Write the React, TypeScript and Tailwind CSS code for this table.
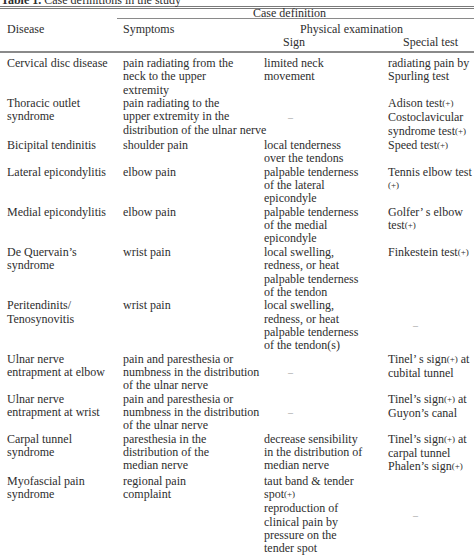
import React from "react";

type Cell = string[] | "-";
interface Row { d: string[]; s: string[]; g: Cell; t: Cell }

const rows: Row[] = [
  { d: ["Cervical disc disease"], s: ["pain radiating from the", "neck to the upper", "extremity"], g: ["limited neck", "movement"], t: ["radiating pain by", "Spurling test"] },
  { d: ["Thoracic outlet", "syndrome"], s: ["pain radiating to the", "upper extremity in the", "distribution of the ulnar nerve"], g: "-", t: ["Adison test(+)", "Costoclavicular", "syndrome test(+)"] },
  { d: ["Bicipital tendinitis"], s: ["shoulder pain"], g: ["local tenderness", "over the tendons"], t: ["Speed test(+)"] },
  { d: ["Lateral epicondylitis"], s: ["elbow pain"], g: ["palpable tenderness", "of the lateral", "epicondyle"], t: ["Tennis elbow test", "(+)"] },
  { d: ["Medial epicondylitis"], s: ["elbow pain"], g: ["palpable tenderness", "of the medial", "epicondyle"], t: ["Golfer\u2019 s elbow", "test(+)"] },
  { d: ["De Quervain\u2019s", "syndrome"], s: ["wrist pain"], g: ["local swelling,", "redness, or heat", "palpable tenderness", "of the tendon"], t: ["Finkestein test(+)"] },
  { d: ["Peritendinits/", "Tenosynovitis"], s: ["wrist pain"], g: ["local swelling,", "redness, or heat", "palpable tenderness", "of the tendon(s)"], t: "-" },
  { d: ["Ulnar nerve", "entrapment at elbow"], s: ["pain and paresthesia or", "numbness in the distribution", "of the ulnar nerve"], g: "-", t: ["Tinel\u2019 s sign(+) at", "cubital tunnel"] },
  { d: ["Ulnar nerve", "entrapment at wrist"], s: ["pain and paresthesia or", "numbness in the distribution", "of the ulnar nerve"], g: "-", t: ["Tinel\u2019s sign(+) at", "Guyon\u2019s canal"] },
  { d: ["Carpal tunnel", "syndrome"], s: ["paresthesia in the", "distribution of the", "median nerve"], g: ["decrease sensibility", "in the distribution of", "median nerve"], t: ["Tinel\u2019s sign(+) at", "carpal tunnel", "Phalen\u2019s sign(+)"] },
  { d: ["Myofascial pain", "syndrome"], s: ["regional pain", "complaint"], g: ["taut band & tender", "spot(+)", "reproduction of", "clinical pain by", "pressure on the", "tender spot"], t: "-" },
];

function Txt({ text }: { text: string }) {
  const parts = text.split("(+)");
  return (
    <>
      {parts.map((p, i) => (
        <React.Fragment key={i}>
          {p}
          {i < parts.length - 1 && <span className="text-[9px] relative -top-[1px]">(+)</span>}
        </React.Fragment>
      ))}
    </>
  );
}

function Lines({ lines }: { lines: string[] }) {
  return (
    <div>
      {lines.map((l, i) => (
        <div key={i} className="whitespace-nowrap">
          <Txt text={l} />
        </div>
      ))}
    </div>
  );
}

function CellView({ c, dashPad }: { c: Cell; dashPad: string }) {
  if (c === "-") {
    return (
      <div className={`flex items-center h-full ${dashPad} text-[#9a9a9a]`}>
        <span className="text-[10px]">–</span>
      </div>
    );
  }
  return <Lines lines={c} />;
}

export default function App() {
  return (
    <div
      className="w-[474px] h-[555px] overflow-hidden bg-white text-[#2e2e2e] text-[12px]"
      style={{ fontFamily: '"Liberation Serif", "Times New Roman", serif' }}
    >
      <div className="-mt-[6px] pl-[1px] leading-[12px] whitespace-nowrap">
        <b>Table 1.</b> Case definitions in the study
      </div>
      <div className="h-[3px] border-t border-b border-[#7a7a7a]" />
      <div className="h-[9px] pl-[117px] flex items-center">
        <div className="flex-1 text-center leading-[9px] pr-[12px]">Case definition</div>
      </div>
      <div className="ml-[117px] h-px bg-[#8a8a8a]" />
      <div className="grid grid-cols-[116px_141px_124px_1fr] pl-[7px] leading-[13px] mt-[4px]">
        <div>Disease</div>
        <div>Symptoms</div>
        <div className="col-span-2 pl-[36px]">Physical examination</div>
        <div />
        <div />
        <div className="pl-[19px]">Sign</div>
        <div className="pl-[15px]">Special test</div>
      </div>
      <div className="mt-[2px] h-[2px] bg-[#8a8a8a]" />
      <div className="grid grid-cols-[116px_141px_124px_1fr] pl-[7px] leading-[13.35px] pt-[4px]">
        {rows.map((r, i) => (
          <React.Fragment key={i}>
            <Lines lines={r.d} />
            <Lines lines={r.s} />
            <CellView c={r.g} dashPad="pl-[24px]" />
            <CellView c={r.t} dashPad="pl-[25px]" />
          </React.Fragment>
        ))}
      </div>
    </div>
  );
}
